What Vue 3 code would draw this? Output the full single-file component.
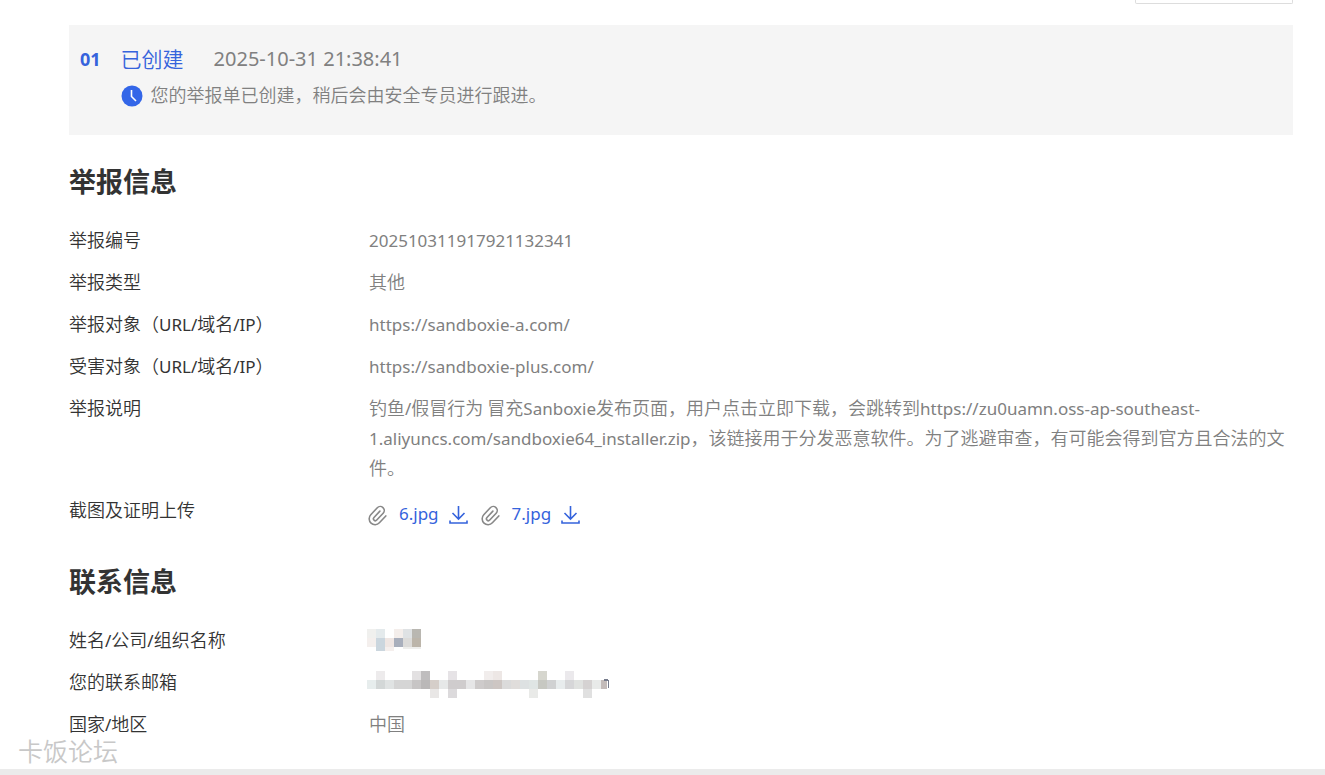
<script setup>
const steps = [
  {
    index: "01",
    name: "已创建",
    time: "2025-10-31 21:38:41",
    message: "您的举报单已创建，稍后会由安全专员进行跟进。",
  },
];

const reportRows = [
  { label: "举报编号", value: "202510311917921132341" },
  { label: "举报类型", value: "其他" },
  { label: "举报对象（URL/域名/IP）", value: "https://sandboxie-a.com/" },
  { label: "受害对象（URL/域名/IP）", value: "https://sandboxie-plus.com/" },
  {
    label: "举报说明",
    value:
      "钓鱼/假冒行为 冒充Sanboxie发布页面，用户点击立即下载，会跳转到https://zu0uamn.oss-ap-southeast-1.aliyuncs.com/sandboxie64_installer.zip，该链接用于分发恶意软件。为了逃避审查，有可能会得到官方且合法的文件。",
  },
];

const files = ["6.jpg", "7.jpg"];

// [column, row, colour], one cell is 9px
const nameCells = [
  [0, 0, "#f0f0ee"], [1, 0, "#e4eaec"], [3, 0, "#f4eeeb"], [4, 0, "#dfe2e4"], [5, 0, "#b9b7b1"],
  [0, 1, "#f4efed"], [1, 1, "#cbd6de"], [2, 1, "#efe6e3"], [3, 1, "#a9afbc"], [4, 1, "#dcdbd9"], [5, 1, "#bcb5aa"],
];
const mailTop = [[1, "#edebec"], [5, "#e3e1e2"], [6, "#bfbdbe"], [9, "#e6e3e6"], [13, "#f1edec"], [14, "#ede7e5"], [19, "#d6d6ce"], [22, "#ebe9ec"]];
const mailMid = [
  "#e7eded", "#d3d7d7", "#e0e3e3", "#d5d5d5", "#d5d5d5", "#c7c5c5", "#bab8b8", "#d5cec9", "#e6e8e8",
  "#cfcccd", "#cfcccd", "#e6e6e7", "#cecbcb", "#c9c6c5", "#cdc6c3", "#dbdbdb", "#e0dddb", "#dde1e2",
  "#dfe5e4", "#c7c8c2", "#d0d1d2", "#e8eced", "#d6d6d8", "#e0e2e0", "#d5d2d2", "#e8eae9",
];
const mailBottom = [[7, "#e9e7e6"], [9, "#dcdadc"], [18, "#e9eae8"], [24, "#e0e0e0"]];

// Latin runs are set a little smaller than the Chinese text around them
const split = (text) =>
  text
    .split(/([\x21-\x7e]+)/)
    .filter(Boolean)
    .map((part) => ({ text: part, latin: /[\x21-\x7e]/.test(part) }));
</script>

<template>
  <div class="page">
    <main class="content">
      <div class="toolbar"><div class="toolbar-box"></div></div>

      <section v-for="step in steps" :key="step.index" class="step">
        <strong class="step-index">{{ step.index }}</strong>
        <div>
          <div class="step-head">
            <span class="step-name">{{ step.name }}</span>
            <time class="step-time">{{ step.time }}</time>
          </div>
          <div class="step-message">
            <svg width="22" height="22" viewBox="0 0 22 22">
              <circle cx="11" cy="11" r="10.5" fill="#3366e8" />
              <path d="M10.5 5v6.5l4.5 4.5" fill="none" stroke="#fff" stroke-width="1.6" />
            </svg>
            <span>{{ step.message }}</span>
          </div>
        </div>
      </section>

      <h2 class="title">举报信息</h2>
      <dl class="list">
        <div v-for="row in reportRows" :key="row.label" class="row">
          <dt>
            <span v-for="(part, i) in split(row.label)" :key="i" :class="{ latin: part.latin }">{{ part.text }}</span>
          </dt>
          <dd>
            <span v-for="(part, i) in split(row.value)" :key="i" :class="{ latin: part.latin }">{{ part.text }}</span>
          </dd>
        </div>
        <div class="row">
          <dt>截图及证明上传</dt>
          <dd class="files">
            <span v-for="file in files" :key="file" class="file">
              <svg class="clip" width="20" height="20" viewBox="0 0 20 20">
                <path
                  transform="translate(9 10.5) rotate(43)"
                  d="M-1.600-4.500V4.200a1.900 1.900 0 0 0 3.800 0V-5.200a4 4 0 0 0-8 0V4.400a5.900 5.900 0 0 0 11.800 0V-5"
                />
              </svg>
              <a href="#" class="latin">{{ file }}</a>
              <a href="#" class="download" :aria-label="file">
                <svg width="20" height="20" viewBox="0 0 20 20">
                  <path d="M9.500 1v13M3.500 8l6 6 6-6M1 15.500v2.500h17v-2.500" />
                </svg>
              </a>
            </span>
          </dd>
        </div>
      </dl>

      <h2 class="title">联系信息</h2>
      <dl class="list">
        <div class="row">
          <dt>姓名<span class="latin">/</span>公司<span class="latin">/</span>组织名称</dt>
          <dd class="masked">
            <svg width="54" height="22" viewBox="0 0 54 22" shape-rendering="crispEdges">
              <rect v-for="([x, y, fill], i) in nameCells" :key="i" :x="x * 9" :y="y * 9" width="9" height="9" :fill="fill" />
              <path d="M9 18h9v4H9z" fill="#cbd6de" />
              <path d="M18 18h9v4h-9z" fill="#f5efed" />
              <path d="M36 18h18v2H36z" fill="#eeeeec" />
            </svg>
          </dd>
        </div>
        <div class="row">
          <dt>您的联系邮箱</dt>
          <dd class="masked">
            <svg width="243" height="27" viewBox="0 0 243 27" shape-rendering="crispEdges">
              <rect v-for="[x, fill] in mailTop" :key="x" :x="x * 9" y="0" width="9" height="9" :fill="fill" />
              <rect v-for="(fill, x) in mailMid" :key="x" :x="x * 9" y="9" width="9" height="9" :fill="fill" />
              <rect v-for="[x, fill] in mailBottom" :key="x" :x="x * 9" y="18" width="9" height="9" :fill="fill" />
              <path d="M234 9h6v9h-6z" fill="#c3bbb9" />
              <path d="M237 8h4v1h1v8h-1v-7h-4z" fill="#777c8c" />
            </svg>
          </dd>
        </div>
        <div class="row">
          <dt>国家<span class="latin">/</span>地区</dt>
          <dd>中国</dd>
        </div>
      </dl>
    </main>
    <div class="watermark">卡饭论坛</div>
    <div class="bottom-line"></div>
  </div>
</template>

<style>
body {
  margin: 0;
  background: #fff;
}
</style>

<style scoped>
.page {
  position: relative;
  font-family: "Noto Sans CJK SC", sans-serif;
  font-size: 18px;
  font-weight: 350;
  line-height: 30px;
  color: #333;
}

.content {
  padding: 0 32px 31px 69px;
}

.latin {
  font-family: "Noto Sans", "Noto Sans CJK SC", sans-serif;
  font-size: 17px;
  font-weight: 400;
  line-height: 20px;
}

.toolbar {
  display: flex;
  justify-content: flex-end;
  margin-bottom: 21px;
}

.toolbar-box {
  box-sizing: border-box;
  width: 158px;
  height: 4px;
  border: 1px solid #ddd;
  border-top: 0;
  border-radius: 0 0 2px 2px;
}

.step {
  display: flex;
  gap: 20px;
  padding: 19px 11px 26px;
  background: #f5f5f5;
}

.step-index {
  font-family: "Noto Sans", sans-serif;
  font-size: 18px;
  font-weight: 700;
  color: #3563dc;
}

.step-head {
  display: flex;
  gap: 30px;
  margin-bottom: 5px;
}

.step-name {
  font-size: 21px;
  line-height: 28px;
  color: #3563dc;
}

.step-time {
  font-family: "Noto Sans", sans-serif;
  font-size: 20px;
  font-weight: 400;
  color: #808080;
}

.step-message {
  display: flex;
  align-items: center;
  gap: 8px;
  color: #808080;
}

.step-message svg {
  margin-top: 4px;
}

.title {
  margin: 26px 0 23px;
  font-size: 27px;
  line-height: 40px;
  font-weight: 700;
}

.list {
  display: flex;
  flex-direction: column;
  gap: 12px;
  margin: 0;
}

.row {
  display: flex;
}

dt {
  flex: 0 0 300px;
}

dd {
  flex: 1;
  min-width: 0;
  margin: 0;
  color: #808080;
}

.files {
  display: flex;
  gap: 13px;
  padding: 5px 0 6px;
}

.file {
  display: flex;
  align-items: center;
  gap: 10px;
  height: 30px;
}

.file a {
  color: #3563dc;
  text-decoration: none;
}

.file svg {
  overflow: visible;
  margin-top: 2px;
}

.clip path {
  fill: none;
  stroke: #888;
  stroke-width: 1.6;
  stroke-linecap: round;
}

.download {
  display: flex;
}

.download path {
  fill: none;
  stroke: #3563dc;
  stroke-width: 1.6;
}

.masked {
  height: 30px;
  margin-left: -2px;
}

.masked svg {
  display: block;
  margin-top: 5px;
}

.watermark {
  position: absolute;
  bottom: 10px;
  left: 18px;
  font-size: 25px;
  color: #c8c8c8;
}

.bottom-line {
  height: 6px;
  background: #ebebeb;
}
</style>
